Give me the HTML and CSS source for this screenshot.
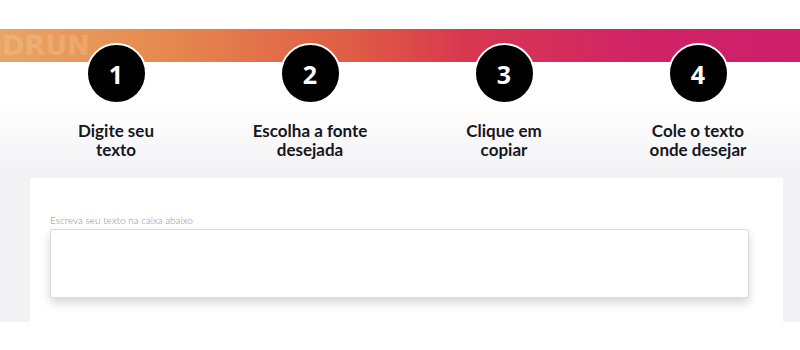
FILE: index.html
```html
<!DOCTYPE html>
<html lang="pt-BR">
<head>
    <meta charset="UTF-8">
    <meta name="viewport" content="width=device-width, initial-scale=1.0">
    <title>Como usar</title>
    <link rel="stylesheet" href="styles.css">
</head>
<body>

<div class="banner">
    <span class="banner-mark">DRUN</span>
</div>

<div class="section">
    <div class="steps">
        <div class="step">
            <div class="step-number">1</div>
            <p class="step-title">Digite seu<br>texto</p>
        </div>
        <div class="step">
            <div class="step-number">2</div>
            <p class="step-title">Escolha a fonte<br>desejada</p>
        </div>
        <div class="step">
            <div class="step-number">3</div>
            <p class="step-title">Clique em<br>copiar</p>
        </div>
        <div class="step">
            <div class="step-number">4</div>
            <p class="step-title">Cole o texto<br>onde desejar</p>
        </div>
    </div>

    <div class="card">
        <label class="input-label" for="userText">Escreva seu texto na caixa abaixo</label>
        <textarea id="userText" class="text-box"></textarea>
    </div>
</div>

</body>
</html>
```

FILE: styles.css
```css
body {
    font-family: "Lato", "Noto Sans", sans-serif;
    background-color: #fff;
    margin: 0;
}
.banner {
    position: relative;
    overflow: hidden;
    height: 33px;
    margin-top: 29px;
    background: linear-gradient(to right, #e9a566 0%, #e68a4f 20%, #df5a45 45%, #d8384f 58%, #d02466 80%, #cf1f6b 100%);
}
.banner-mark {
    position: absolute;
    left: 2px;
    top: 0;
    font-family: "DejaVu Sans", sans-serif;
    font-weight: bold;
    font-size: 27px;
    line-height: 33px;
    color: rgba(255, 225, 180, 0.22);
}
.section {
    height: 260px;
    background: linear-gradient(to bottom, #fff 40px, #f2f2f5 115px);
}
.steps {
    display: grid;
    grid-template-columns: repeat(4, 194px);
    padding-left: 19px;
}
.step {
    display: flex;
    flex-direction: column;
    align-items: center;
}
.step-number {
    position: relative;
    width: 57px;
    height: 57px;
    margin-top: -19px;
    border: 2px solid #fff;
    border-radius: 50%;
    background-color: #000;
    color: #fff;
    font-family: "Open Sans", sans-serif;
    font-weight: bold;
    font-size: 25px;
    display: flex;
    align-items: center;
    justify-content: center;
}
.step-title {
    margin: 17px 0 0;
    text-align: center;
    font-weight: bold;
    font-size: 17px;
    line-height: 19px;
    color: #16161f;
}
.card {
    background-color: #fff;
    margin: 19px 17px 0 30px;
    height: 145px;
    padding: 36px 0 0 20px;
    box-sizing: border-box;
}
.input-label {
    display: block;
    font-weight: 300;
    font-size: 10px;
    line-height: 12px;
    color: #8c8c8c;
    margin-bottom: 3px;
}
.text-box {
    display: block;
    width: 699px;
    height: 69px;
    box-sizing: border-box;
    border: 1px solid #dcdcdc;
    border-radius: 2px;
    box-shadow: 0 5px 10px rgba(0, 0, 0, 0.16);
    resize: none;
    outline: none;
}
```
